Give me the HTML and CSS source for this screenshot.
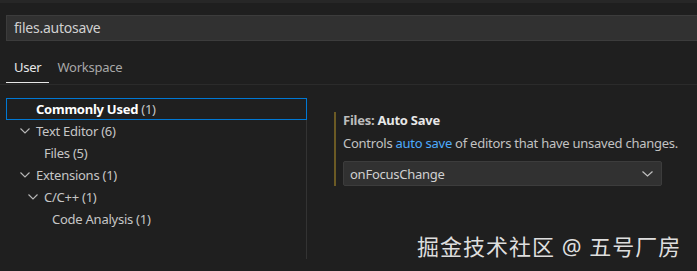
FILE: index.html
```html
<!DOCTYPE html>
<html lang="en">
  <head>
    <meta charset="UTF-8" />
    <title>Settings</title>
    <link rel="stylesheet" href="styles.css">
  </head>
  <body>
    <div class="top-strip"></div>

    <div class="search-box">files.autosave</div>

    <div class="tabs">
      <span class="tab active">User</span>
      <span class="tab">Workspace</span>
    </div>

    <div class="main">
      <div class="tree">
        <div class="row selected lvl1">
          <span class="twist"></span>
          <span class="label"><b>Commonly Used</b> (1)</span>
        </div>
        <div class="row lvl1">
          <svg class="twist" viewBox="0 0 10 6"><path d="M0.5 0.5 L5 5 L9.5 0.5" /></svg>
          <span class="label">Text Editor (6)</span>
        </div>
        <div class="row lvl2">
          <span class="twist"></span>
          <span class="label">Files (5)</span>
        </div>
        <div class="row lvl1">
          <svg class="twist" viewBox="0 0 10 6"><path d="M0.5 0.5 L5 5 L9.5 0.5" /></svg>
          <span class="label">Extensions (1)</span>
        </div>
        <div class="row lvl2">
          <svg class="twist" viewBox="0 0 10 6"><path d="M0.5 0.5 L5 5 L9.5 0.5" /></svg>
          <span class="label">C/C++ (1)</span>
        </div>
        <div class="row lvl3">
          <span class="twist"></span>
          <span class="label">Code Analysis (1)</span>
        </div>
      </div>

      <div class="settings">
        <div class="setting">
          <div class="setting-title"><span class="cat">Files: </span>Auto Save</div>
          <div class="setting-desc">Controls <a href="#">auto save</a> of editors that have unsaved changes.</div>
          <div class="select">
            <span>onFocusChange</span>
            <svg class="select-arrow" viewBox="0 0 11 6"><path d="M0.5 0.5 L5.5 5 L10.5 0.5" /></svg>
          </div>
        </div>
        <div class="watermark">掘金技术社区 @ 五号厂房</div>
      </div>
    </div>
  </body>
</html>
```

FILE: styles.css
```css
:root {
  --bg-color: #1f1f1f;
  --text-color: #cccccc;
  --input-bg: #313131;
  --input-border: #3c3c3c;
  --focus-color: #0078d4;
  --link-color: #4daafc;
  --modified-color: #6b5a24;
}
body {
  margin: 0;
  width: 697px;
  height: 271px;
  overflow: hidden;
  background: var(--bg-color);
  color: var(--text-color);
  font-family: "Noto Sans", "Noto Sans CJK SC", sans-serif;
  font-size: 13px;
  letter-spacing: -0.25px;
}

.top-strip {
  height: 3px;
  background: #272727;
}

.search-box {
  margin: 12px 0 0 6px;
  height: 24px;
  line-height: 24px;
  padding-left: 7px;
  background: var(--input-bg);
  border: 1px solid var(--input-border);
  border-right: none;
  font-size: 14px;
  color: #d0d0d0;
}

.tabs {
  margin-top: 13px;
  padding-left: 6px;
  display: flex;
  border-bottom: 1px solid #2b2b2b;
  height: 30px;
}
.tab {
  padding: 2px 8px 0;
  line-height: 22px;
  color: #a8a8a8;
}
.tab.active {
  color: #e7e7e7;
  border-bottom: 1px solid #e7e7e7;
  height: 26px;
}

.main {
  display: flex;
  margin-top: 13px;
}

.tree {
  width: 300px;
  margin-left: 6px;
  border-right: 1px solid #333333;
  height: 161px;
}
.row {
  height: 22px;
  display: flex;
  align-items: center;
  border: 1px solid transparent;
  box-sizing: border-box;
  color: #c6c6c6;
}
.row.selected {
  border-color: var(--focus-color);
  margin-right: -1px;
}
.row b {
  color: #ffffff;
}
.twist {
  width: 10px;
  height: 6px;
  flex-shrink: 0;
  margin-right: 6px;
  fill: none;
  stroke: #b8b8b8;
  stroke-width: 1.1;
}
.lvl1 { padding-left: 13px; }
.lvl2 { padding-left: 21px; }
.lvl3 { padding-left: 29px; }

.settings {
  flex: 1;
  position: relative;
}
.setting {
  margin: 14px 0 0 27px;
  padding-left: 7px;
  border-left: 2px solid var(--modified-color);
  width: 319px;
}
.setting-title {
  font-weight: bold;
  color: #e7e7e7;
  line-height: 16px;
}
.setting-title .cat {
  color: #bdbdbd;
}
.setting-desc {
  margin-top: 7px;
  line-height: 16px;
  white-space: nowrap;
  color: #c2c2c2;
}
.setting-desc a {
  color: var(--link-color);
  text-decoration: none;
}
.select {
  margin-top: 10px;
  height: 25px;
  box-sizing: border-box;
  background: var(--input-bg);
  border: 1px solid var(--input-border);
  border-radius: 2px;
  display: flex;
  align-items: center;
  justify-content: space-between;
  padding: 0 8px 0 6px;
  color: #d0d0d0;
}
.select-arrow {
  width: 11px;
  height: 6px;
  fill: none;
  stroke: #c0c0c0;
  stroke-width: 1.2;
}

.watermark {
  position: absolute;
  left: 110px;
  top: 131px;
  font-size: 22px;
  color: #dedede;
  letter-spacing: 1px;
  white-space: nowrap;
}
```
